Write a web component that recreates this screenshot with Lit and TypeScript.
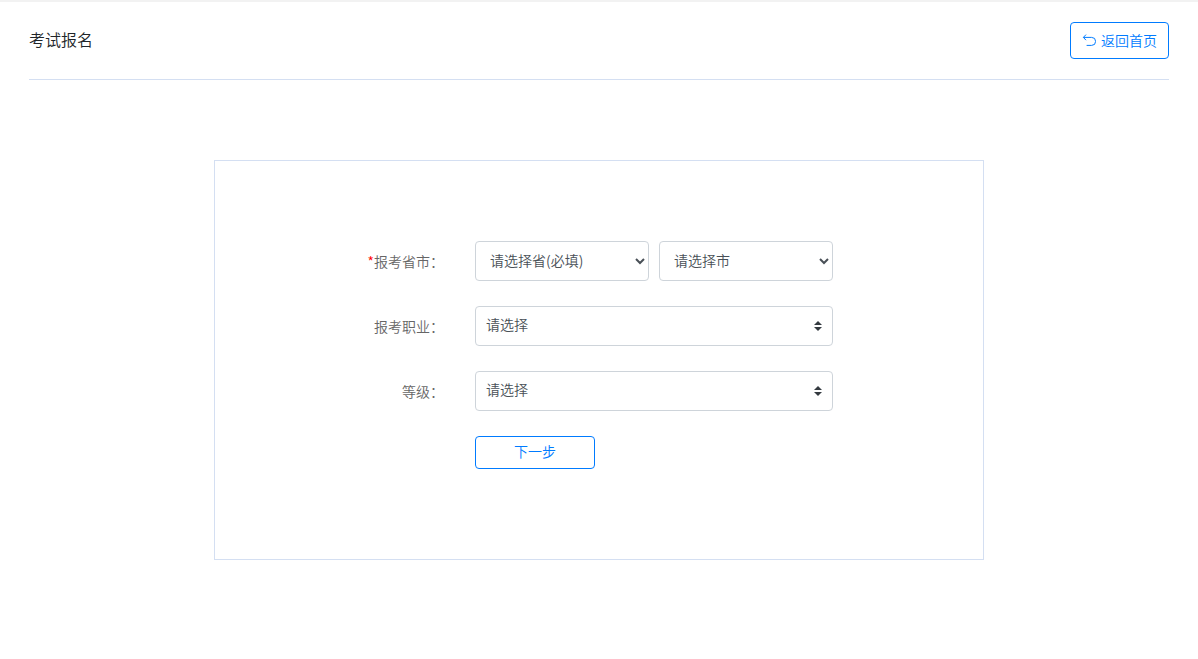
import { LitElement, html, css, svg } from "lit";
import { customElement, property } from "lit/decorators.js";

const backIcon = svg`
  <svg class="icon" viewBox="0 0 14 14" width="14" height="14" aria-hidden="true">
    <path d="M4 .6 1.4 3.4 4 6.2M1.4 3.4H9.6a3.9 3.9 0 0 1 0 8H4.6"
      fill="none" stroke="currentColor" stroke-width="1"/>
  </svg>`;

@customElement("page-header")
export class PageHeader extends LitElement {
  @property() heading = "";

  static styles = css`
    :host {
      display: block;
    }
    .bar {
      display: flex;
      align-items: center;
      justify-content: space-between;
      padding: 20px 0;
      border-bottom: 1px solid #d4dff2;
    }
    .title {
      margin: 0;
      padding-bottom: 3px;
      font-size: 16px;
      line-height: 24px;
      font-weight: inherit;
      color: #212529;
    }
    .back {
      display: flex;
      align-items: center;
      gap: 5px;
      box-sizing: border-box;
      height: 37px;
      padding: 0 11px;
      border: 1px solid #007bff;
      border-radius: 4px;
      background: #fff;
      color: #007bff;
      font: inherit;
      cursor: pointer;
    }
  `;

  render() {
    return html`
      <header class="bar">
        <h1 class="title">${this.heading}</h1>
        <button class="back" type="button">${backIcon}<span>返回首页</span></button>
      </header>
    `;
  }
}

@customElement("signup-form")
export class SignupForm extends LitElement {
  static styles = css`
    :host {
      display: block;
    }
    .card {
      box-sizing: border-box;
      max-width: 770px;
      margin: 80px auto;
      padding: 80px 150px 90px;
      border: 1px solid #d4dff2;
    }
    .form {
      display: grid;
      grid-template-columns: 79px 1fr;
      column-gap: 31px;
      row-gap: 25px;
    }
    .label {
      line-height: 40px;
      text-align: right;
      white-space: nowrap;
      color: #666;
    }
    .required {
      color: #f00;
    }
    .pair {
      display: flex;
      gap: 10px;
    }
    .select {
      flex: 1;
      box-sizing: border-box;
      width: 100%;
      min-width: 0;
      height: 40px;
      padding: 0 10px 2px;
      border: 1px solid #ced4da;
      border-radius: 4px;
      background-color: #fff;
      color: #495057;
      font: inherit;
    }
    .custom {
      appearance: none;
      padding: 0 28px 4px 10px;
      background-image: url("data:image/svg+xml,%3Csvg xmlns='http://www.w3.org/2000/svg' viewBox='0 0 4 5'%3E%3Cpath fill='%23343a40' d='M2 0L0 2h4zm0 5L0 3h4z'/%3E%3C/svg%3E");
      background-repeat: no-repeat;
      background-position: right 10px center;
      background-size: 8px 10px;
    }
    .next {
      grid-column: 2;
      justify-self: start;
      box-sizing: border-box;
      width: 120px;
      height: 33px;
      padding: 0 0 2px;
      border: 1px solid #007bff;
      border-radius: 4px;
      background: #fff;
      color: #007bff;
      font: inherit;
      cursor: pointer;
    }
  `;

  render() {
    return html`
      <section class="card">
        <form class="form">
          <label class="label" for="province"><span class="required">*</span>报考省市：</label>
          <div class="pair">
            <select class="select" id="province" required>
              <option value="">请选择省(必填)</option>
            </select>
            <select class="select" id="city" aria-label="报考市">
              <option value="">请选择市</option>
            </select>
          </div>
          <label class="label" for="job">报考职业：</label>
          <select class="select custom" id="job">
            <option value="">请选择</option>
          </select>
          <label class="label" for="level">等级：</label>
          <select class="select custom" id="level">
            <option value="">请选择</option>
          </select>
          <button class="next" type="button">下一步</button>
        </form>
      </section>
    `;
  }
}

@customElement("app-root")
export class AppRoot extends LitElement {
  static styles = css`
    :host {
      display: block;
      box-sizing: border-box;
      min-height: 100vh;
      border-top: 2px solid #f2f2f2;
      background: #fff;
      font: 350 14px/21px "Noto Sans CJK SC", sans-serif;
    }
    .container {
      max-width: 1140px;
      margin: 0 auto;
    }
  `;

  render() {
    return html`
      <main class="container">
        <page-header heading="考试报名"></page-header>
        <signup-form></signup-form>
      </main>
    `;
  }
}
